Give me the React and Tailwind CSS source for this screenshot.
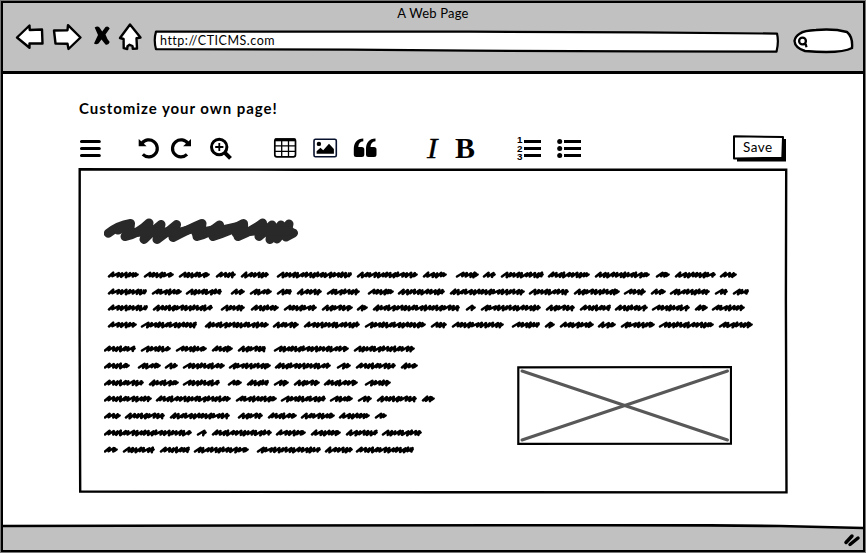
import React from "react";

const wideLines = [
  [[108,139],[144,174],[179,210],[216,236],[241,269],[277,352],[357,418],[423,447],[456,479],[483,496],[501,544],[548,590],[595,650],[656,670],[675,716],[720,737]],
  [[108,147],[152,182],[186,222],[231,245],[250,272],[277,292],[297,322],[327,360],[368,394],[398,445],[450,525],[529,569],[574,620],[624,646],[651,666],[670,710],[715,728],[733,749]],
  [[108,148],[153,213],[221,245],[251,279],[284,317],[322,353],[357,368],[373,460],[466,476],[481,541],[546,575],[580,611],[615,648],[652,690],[695,708],[712,745]],
  [[108,137],[141,197],[205,269],[273,299],[304,360],[365,426],[431,447],[452,504],[512,540],[545,555],[560,594],[598,616],[621,655],[659,714],[719,753]],
];

const narrowLines = [
  [[104,136],[141,171],[176,207],[212,233],[238,266],[274,349],[354,415]],
  [[104,130],[138,161],[165,178],[183,225],[229,271],[275,331],[337,351],[356,396],[401,418]],
  [[104,144],[149,179],[183,220],[228,242],[247,269],[274,289],[294,320],[324,358],[365,391]],
  [[104,152],[156,231],[236,277],[281,326],[330,353],[358,372],[377,417],[422,435]],
  [[104,121],[125,165],[170,230],[238,263],[268,297],[301,335],[339,370],[375,387]],
  [[104,192],[197,207],[212,272],[276,306],[311,341],[346,378],[382,422]],
  [[104,118],[123,155],[160,190],[194,249],[257,321],[325,353],[356,414]],
];

// Forward and backward reach of successive strokes in a scribbled word.
const reaches = [[4.6, 0.6], [5.6, 1.6], [4.2, 0.8], [6.4, 1.2], [4.6, 1], [5.2, 0.5], [4.2, 1.3]];

// Builds one scribbled word as a run of slanted strokes.
function scribble(start, end) {
  const to = end - 1.4;
  let x = start + 1;
  let i = Math.round(start * 3);
  let d = `M${x} 6.5`;
  while (x + 5 < to) {
    const [up, back] = reaches[i % reaches.length];
    const peak = Math.min(x + up, to);
    d += `L${peak.toFixed(1)} ${2.7 + (i % 3) * 0.35}L${(peak - back).toFixed(1)} ${6.2 + (i % 4) * 0.35}`;
    x = peak - back;
    i += 1;
  }
  return `${d}L${(to - 1.8).toFixed(1)} 3.4L${(to - 2.2).toFixed(1)} 6L${to} 4.5`;
}

function ScribbleLine({ words, origin, className }) {
  return (
    <svg className={className} width="660" height="10" fill="none" stroke="#000" strokeWidth="2.5" strokeLinecap="round" strokeLinejoin="round">
      <path transform={`translate(${-origin} 0)`} d={words.map(([a, b]) => scribble(a, b)).join("")} />
    </svg>
  );
}

function NavIcons() {
  return (
    <svg className="mt-[17px] ml-[9px] h-8 w-[134px] shrink-0" viewBox="12 20 134 32" fill="#fff" stroke="#000" strokeWidth="2.4" strokeLinejoin="round" strokeLinecap="round">
      <path d="M17 37.5L29.5 25.500L29.700 30L42 29.500L42.500 43.500L29.500 43.500L29.500 47.800Z" />
      <path d="M54 30.500L67.500 30.200L68 25.200L80.500 37.500L68.500 49L67.500 43.800L55.500 43.500Z" />
      <path d="M94.700 27.500Q97.500 25.500 99.500 27.500L102.200 31.500L105.500 27Q108 25.500 109.700 28.500L105.500 34.500Q107 39 109.700 42Q108.500 45.500 105.500 44.500L101.500 39.500L98.500 43.500Q96 45 94 43.500L98 35Z" fill="#000" stroke="none" />
      <path d="M130 24.500L140.500 37.500L136.500 38.200L137 48.500L132.800 48.800L132.500 46L129.500 44.800L127.500 46.200L127.200 49L123.700 48.200L123.600 39L120 38Z" />
    </svg>
  );
}

function Toolbar() {
  return (
    <div className="flex h-8 items-center">
      <svg width="514" height="32" viewBox="76 132 514 32" fill="none" stroke="#000" className="shrink-0">
        <g strokeWidth="3.100" strokeLinecap="round">
          <path d="M81.500 141.500H99.300M81.500 148.500H99.300M81.500 155.500H99.300" />
        </g>
        <g strokeWidth="3.200">
          <path d="M141.800 143.500A8.500 8.500 0 1 1 142.800 154.400" />
          <path d="M188 143.500A8.500 8.500 0 1 0 187 154.400" />
        </g>
        <path d="M138.700 139V146.200H146.600Z" fill="#000" stroke="none" />
        <path d="M191 139V146.200H183.100Z" fill="#000" stroke="none" />
        <circle cx="219.200" cy="147" r="7.700" strokeWidth="3" />
        <path d="M225 152.900L230.500 158.400" strokeWidth="4" />
        <path d="M215.200 147H223.400M219.300 142.900V151.100" strokeWidth="1.800" />
        <rect x="274.800" y="139" width="20.700" height="17.800" rx="2" strokeWidth="1.700" />
        <path d="M274.800 139.800H295.500" strokeWidth="3" />
        <path d="M275 145.800H295.500M275 151.300H295.500M281.700 139V156.500M288.500 139V156.500" strokeWidth="1.300" />
        <rect x="314" y="139.200" width="22.300" height="17.500" rx="1.500" stroke="#07102c" strokeWidth="1.600" />
        <g fill="#000" stroke="none">
          <circle cx="318.900" cy="143.900" r="2.200" />
          <path d="M316.600 153.800V151.300L320.500 147.700L323.200 150.200L329 143.700L333.900 148.900V153.800Z" />
          <path d="M363.300 138.500V141.300C360 141.700 358.500 143.700 358.300 147H361.800Q364.300 147 364.300 149.500V154.500Q364.300 157 361.800 157H356.300Q353.800 157 353.800 154.500V149C353.800 142.500 357 138.800 363.300 138.500Z" />
          <path transform="translate(12.200 0)" d="M363.300 138.500V141.300C360 141.700 358.500 143.700 358.300 147H361.800Q364.300 147 364.300 149.500V154.500Q364.300 157 361.800 157H356.300Q353.800 157 353.800 154.500V149C353.800 142.500 357 138.800 363.300 138.500Z" />
          <text x="427" y="158" fontFamily="Liberation Serif, serif" fontSize="30" fontStyle="italic" stroke="#000" strokeWidth=".3" textLength="10.500" lengthAdjust="spacingAndGlyphs">I</text>
          <text x="455" y="158" fontFamily="Liberation Serif, serif" fontSize="30" fontWeight="700" textLength="20" lengthAdjust="spacingAndGlyphs">B</text>
          <g fontFamily="Liberation Sans, sans-serif" fontSize="8.600" fontWeight="700">
            <text x="517" y="143.200" textLength="5.500" lengthAdjust="spacingAndGlyphs">1</text>
            <text x="517" y="151.600" textLength="5.500" lengthAdjust="spacingAndGlyphs">2</text>
            <text x="517" y="160" textLength="5.500" lengthAdjust="spacingAndGlyphs">3</text>
          </g>
          <circle cx="559.700" cy="141.500" r="2.500" />
          <circle cx="559.700" cy="148.500" r="2.500" />
          <circle cx="559.700" cy="155.500" r="2.500" />
        </g>
        <path d="M524 141.500H541M524 148.500H541M524 155.500H541M564 141.500H581M564 148.500H581M564 155.500H581" strokeWidth="3.200" />
      </svg>
      <button className="mt-px ml-[142px] grid h-[29px] w-[56px] shrink-0">
        <svg className="col-start-1 row-start-1" width="56" height="29" viewBox="0 0 56 29">
          <path d="M5 5H54V27.500H5Z" fill="#000" />
          <path d="M2 2.300L51 3L50.300 23.700L2 24.500Z" fill="#fff" stroke="#000" strokeWidth="2" strokeLinejoin="round" />
        </svg>
        <span className="col-start-1 row-start-1 mt-[5px] ml-[11px] text-left font-['Lato',sans-serif] text-[13.5px] leading-4 tracking-[0.5px]">Save</span>
      </button>
    </div>
  );
}

function ImagePlaceholder() {
  return (
    <svg className="mt-[21px] ml-[81px] shrink-0" width="216" height="80" viewBox="516 365 216 80" fill="none">
      <path d="M518.300 367.300L731 367V443.600L518.300 443.800Z" stroke="#000" strokeWidth="2.200" />
      <path d="M522 371L727.500 440M727.500 371L522 440" stroke="#585858" strokeWidth="3" strokeLinecap="round" />
    </svg>
  );
}

function Editor() {
  return (
    <div className="grid h-[326px] w-[710px]">
      <svg className="col-start-1 row-start-1" width="710" height="326" viewBox="78 168 710 326" fill="none">
        <path d="M79.700 169.300L300 169.700L600 169.800L786.200 169.800L785.900 300L786.500 492.400L430 492.300L80.200 491.500L79.600 330Z" stroke="#000" strokeWidth="2.400" />
      </svg>
      <div className="col-start-1 row-start-1 flex flex-col pt-[48px] pl-[26px]">
        <svg width="196" height="30" viewBox="104 216 196 30" fill="none" stroke="#292929" strokeWidth="9" strokeLinecap="round" strokeLinejoin="round">
          <path d="M108.300 233.300Q118 225.500 130.500 223.500Q130.500 231 125 236.500Q138 234 149 223L144 239.500Q151 232 161 224.500L157 239.500Q168 232 176.500 224.500L173 237.500Q189 229 202 223.500Q201.500 231 197 236.500Q210 233 219.500 225L213 236.500Q230 231 243.500 223.500Q244.500 230 238 236.500Q252 231 262.500 223L259 236.500Q266 231 272 225L270 239.500L281 225L277 239L289 224L286 237L293.500 233" />
          <path d="M118 230L128 226L127 233L142 232H180L196 228V233L214 230L218 231L236 227V233L254 231H290" />
        </svg>
        <div className="mt-[24px] flex flex-col gap-[6.7px]">
          {wideLines.map((words, i) => <ScribbleLine key={i} words={words} origin={104} />)}
        </div>
        <div className="mt-[14px] flex">
          <div className="flex w-[331px] flex-col gap-[6.8px] overflow-hidden">
            {narrowLines.map((words, i) => <ScribbleLine key={i} words={words} origin={104} className="shrink-0" />)}
          </div>
          <ImagePlaceholder />
        </div>
      </div>
    </div>
  );
}

export default function App() {
  return (
    <div className="h-[553px] w-[866px] bg-[#777] p-px font-['Lato',sans-serif] text-black">
      <div className="flex h-full flex-col border-2 border-black bg-white">
        <header className="flex h-[71px] shrink-0 flex-col border-b-[3px] border-black bg-[#c1c1c1]">
          <div className="h-[2px]" />
          <div className="h-[16px] text-center text-[13px] leading-[16px] tracking-[0.2px]">A Web Page</div>
          <div className="-mt-[18px] flex">
            <NavIcons />
            <div className="mt-[26px] ml-[6px] grid h-6 w-[628px] shrink-0">
              <svg className="col-start-1 row-start-1" width="628" height="24" viewBox="152 29 628 24">
                <path d="M156 31.600L470 31.700L640 32.300L777 33.600Q779 42 776.500 51.700L640 51.400L470 50.700L350 49.700L156 49.200Q153.500 40 156 31.600Z" fill="#fff" stroke="#000" strokeWidth="2.200" strokeLinejoin="round" />
              </svg>
              <span className="col-start-1 row-start-1 mt-[4px] ml-[8px] text-[12.5px] leading-4 tracking-[0.5px]">http://CTICMS.com</span>
            </div>
            <svg className="mt-[24px] ml-[12px] shrink-0" width="62" height="28" viewBox="792 27 62 28">
              <path d="M800 33.500Q804 30.500 816 30Q834 28.500 847 32Q853 37 852 48Q841 54 805 51Q795 48 794.500 41Q795 36.500 800 33.500Z" fill="#fff" stroke="#000" strokeWidth="2.400" />
              <circle cx="802.500" cy="41" r="3.400" fill="none" stroke="#000" strokeWidth="2.300" />
              <path d="M803 44L805.800 44.500L806.500 47.300" fill="none" stroke="#000" strokeWidth="2.200" />
            </svg>
          </div>
        </header>
        <main className="flex flex-1 flex-col pt-[25px] pl-[75px]">
          <h1 className="ml-[1px] h-[18px] text-[15px] leading-[18px] font-bold tracking-[0.95px]">Customize your own page!</h1>
          <div className="-ml-[2px] mt-[15px]"><Toolbar /></div>
          <div className="mt-[4px]"><Editor /></div>
        </main>
        <svg className="shrink-0" width="860" height="28" viewBox="3 522 860 28">
          <path d="M2 525H250L600 524.800L710 525L790 525.800L864 528V551H2Z" fill="#c1c1c1" />
          <path d="M2 526L250 525.500L600 525.200L710 525.400L780 526L864 528" fill="none" stroke="#000" strokeWidth="2.600" />
          <path d="M846 542.500L852 536M850 544.500L858 538" stroke="#000" strokeWidth="3.500" strokeLinecap="round" />
        </svg>
      </div>
    </div>
  );
}
